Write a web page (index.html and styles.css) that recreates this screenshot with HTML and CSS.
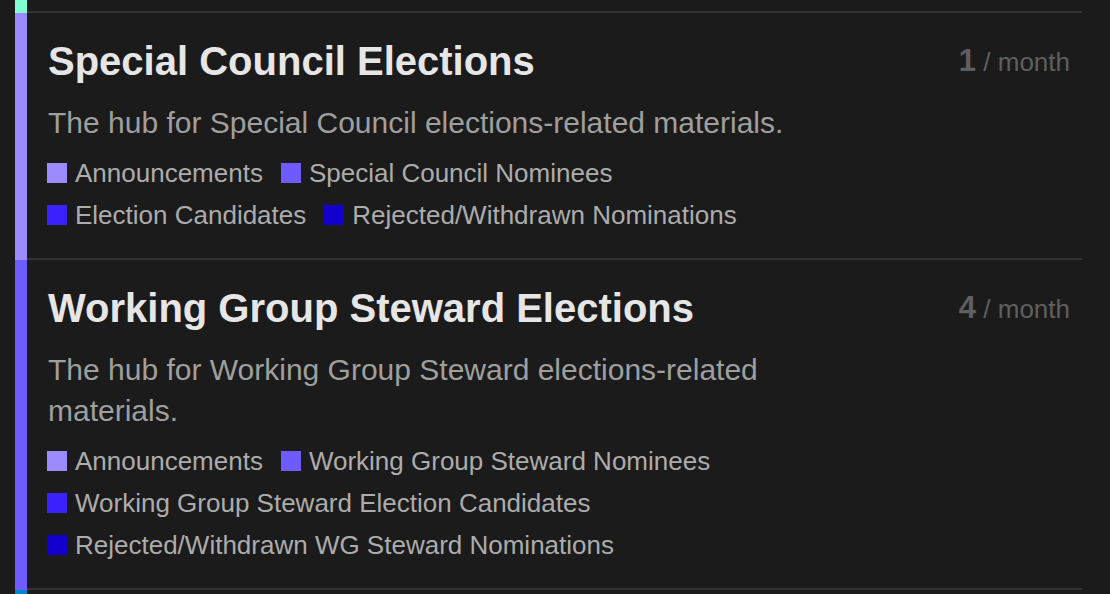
FILE: index.html
```html
<!DOCTYPE html>
<html lang="en">
<head>
<meta charset="utf-8">
<title>Categories</title>
<link rel="stylesheet" href="styles.css">
</head>
<body>
<div class="list">
  <div class="row stub">
    <div class="bar bar-green"></div>
    <div class="content"></div>
  </div>

  <div class="row">
    <div class="bar bar-lilac"></div>
    <div class="content">
      <div class="head">
        <h2 class="title">Special Council Elections</h2>
        <div class="stat"><span class="num">1</span> / month</div>
      </div>
      <p class="desc">The hub for Special Council elections-related materials.</p>
      <ul class="cats">
        <li class="cat"><span class="sq sq-1"></span>Announcements</li>
        <li class="cat"><span class="sq sq-2"></span>Special Council Nominees</li>
        <li class="cat"><span class="sq sq-3"></span>Election Candidates</li>
        <li class="cat"><span class="sq sq-4"></span>Rejected/Withdrawn Nominations</li>
      </ul>
    </div>
  </div>

  <div class="row">
    <div class="bar bar-violet"></div>
    <div class="content">
      <div class="head">
        <h2 class="title">Working Group Steward Elections</h2>
        <div class="stat"><span class="num">4</span> / month</div>
      </div>
      <p class="desc">The hub for Working Group Steward elections-related materials.</p>
      <ul class="cats">
        <li class="cat"><span class="sq sq-1"></span>Announcements</li>
        <li class="cat"><span class="sq sq-2"></span>Working Group Steward Nominees</li>
        <li class="cat"><span class="sq sq-3"></span>Working Group Steward Election Candidates</li>
        <li class="cat"><span class="sq sq-4"></span>Rejected/Withdrawn WG Steward Nominations</li>
      </ul>
    </div>
  </div>

  <div class="row stub">
    <div class="bar bar-teal"></div>
    <div class="content"></div>
  </div>
</div>
</body>
</html>
```

FILE: styles.css
```css
html, body {
  margin: 0;
  padding: 0;
  background: #1b1b1b;
  height: 100%;
  overflow: hidden;
}

body {
  font-family: "Liberation Sans", Arial, Helvetica, sans-serif;
  color: #e5e5e5;
}

.list {
  width: 1067px;
  padding-left: 15px;
}

.row {
  display: flex;
}

.bar {
  width: 12px;
  flex: none;
}

.bar-green { background: #80ffd2; }
.bar-lilac { background: #9b8bff; }
.bar-violet { background: #6f5cff; }
.bar-teal { background: #0088cc; }

.content {
  flex: 1;
  min-width: 0;
  border-bottom: 2px solid #323232;
  padding: 24px 12px 28px 20px;
}

.stub .content {
  height: 11px;
  padding: 0;
}

.stub:last-child .content {
  height: 30px;
  border-bottom: none;
}

.head {
  display: flex;
  justify-content: space-between;
  align-items: center;
}

.title {
  margin: 0 0 0 1px;
  font-size: 40px;
  line-height: 48px;
  font-weight: bold;
  color: #e6e6e6;
}

.stat {
  font-size: 26px;
  line-height: 32px;
  color: #5f5f5f;
}

.num {
  font-weight: bold;
  font-size: 31px;
}

.desc {
  margin: 17px 0 15px 1px;
  max-width: 790px;
  font-size: 30px;
  line-height: 41px;
  color: #9f9f9f;
}

.cats {
  list-style: none;
  margin: 0;
  padding: 0;
  max-width: 790px;
  display: flex;
  flex-wrap: wrap;
  column-gap: 18px;
  row-gap: 12px;
}

.cat {
  display: flex;
  align-items: center;
  gap: 8px;
  font-size: 26px;
  line-height: 30px;
  color: #acacac;
}

.sq {
  width: 20px;
  height: 20px;
  flex: none;
}

.sq-1 { background: #9b8bff; }
.sq-2 { background: #6e5bff; }
.sq-3 { background: #3a22ff; }
.sq-4 { background: #1400cc; }
```
